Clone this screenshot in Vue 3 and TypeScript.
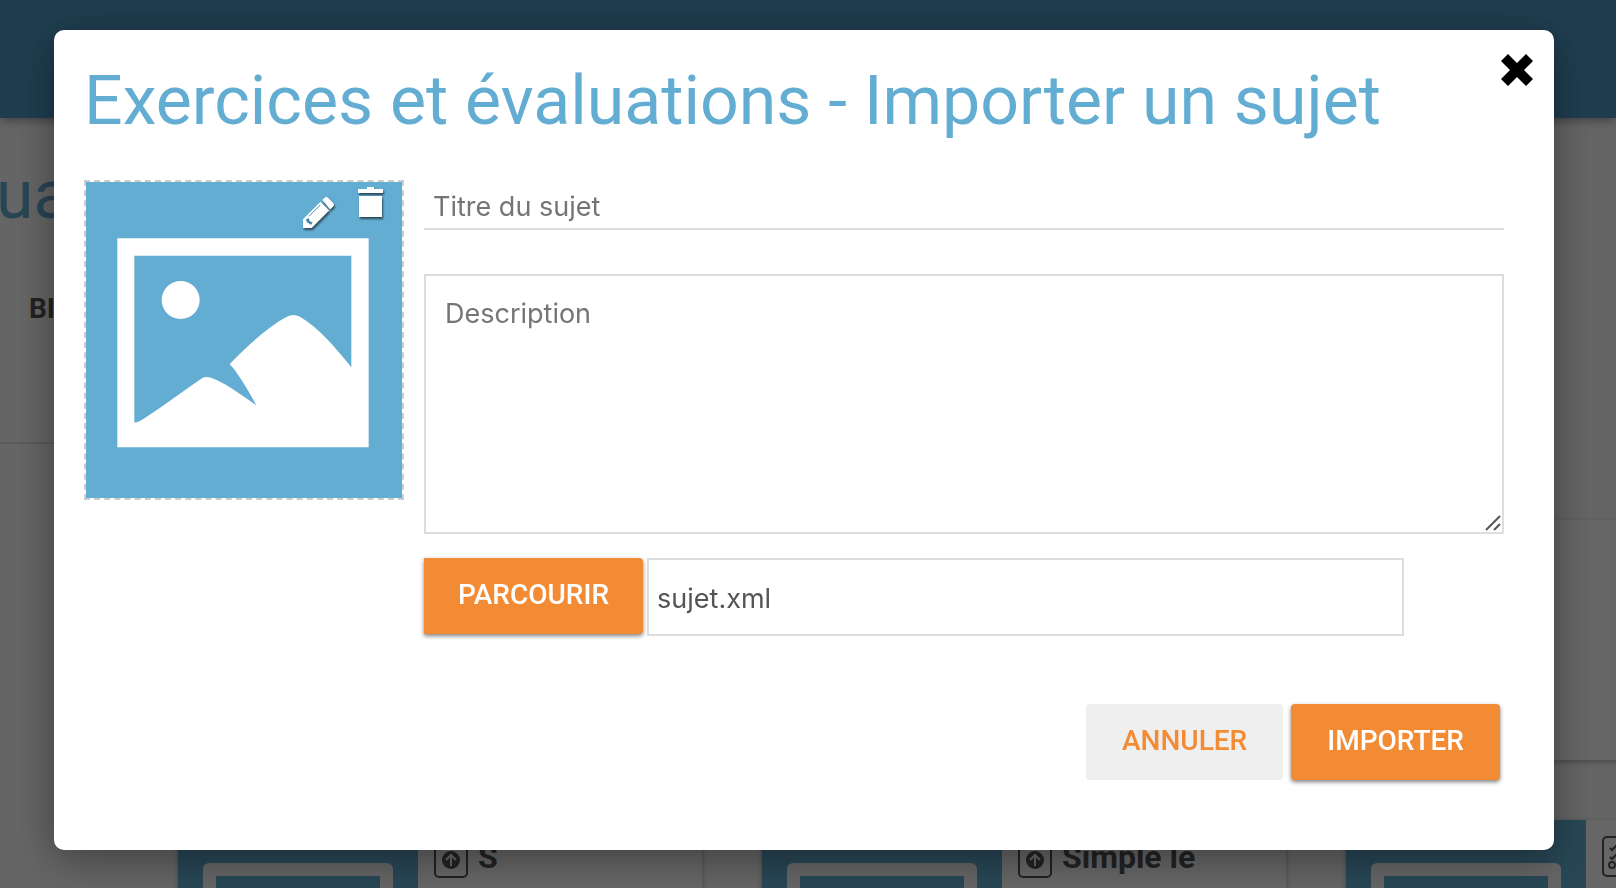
<script setup lang="ts">
import { ref } from 'vue'

interface Subject {
  id: number
  title: string
  icon: 'upload' | 'list'
}

const subjects: Subject[] = [
  { id: 1, title: 'S', icon: 'upload' },
  { id: 2, title: 'Simple le', icon: 'upload' },
  { id: 3, title: '', icon: 'list' },
]

const open = ref(true)
const title = ref('')
const description = ref('')
const fileName = ref('sujet.xml')
</script>

<template>
  <div class="app">
    <header class="topbar"></header>
    <div class="page">
      <h2 class="page-title">ua</h2>
      <div class="tabs">BI</div>
      <div class="upper">
        <div class="band"></div>
        <article class="card featured">
          <svg class="kind" viewBox="0 0 34 42">
            <rect x="1.5" y="1.5" width="31" height="39" rx="4" fill="none" stroke="#555" stroke-width="3" />
            <circle cx="17" cy="24" r="9" fill="#555" />
            <path d="M17 30V19M12 24l5-5 5 5" fill="none" stroke="#fff" stroke-width="2" />
          </svg>
          <p class="featured-text">M<br />2</p>
        </article>
      </div>
      <div class="cards">
        <article v-for="subject in subjects" :key="subject.id" class="card">
          <div class="card-thumb">
            <div class="card-frame"></div>
          </div>
          <div class="card-head">
            <svg v-if="subject.icon === 'upload'" class="kind" viewBox="0 0 34 42">
              <rect x="1" y="1" width="32" height="40" rx="4" fill="none" stroke="#555" stroke-width="2" />
              <circle cx="17" cy="24" r="9" fill="#555" />
              <path d="M17 30V19M12 24l5-5 5 5" fill="none" stroke="#fff" stroke-width="2" />
            </svg>
            <svg v-else class="kind" viewBox="0 0 34 42">
              <rect x="1" y="1" width="32" height="39" rx="4" fill="none" stroke="#555" stroke-width="2" />
              <path d="M8 12l2 2 5-5M8 21l2 2 5-5M18 12h10M18 21h10M18 29h10" fill="none" stroke="#555" stroke-width="2" />
              <circle cx="10" cy="29" r="3" fill="none" stroke="#555" stroke-width="2" />
            </svg>
            <h3 class="card-title">{{ subject.title }}</h3>
          </div>
        </article>
      </div>
    </div>

    <div v-if="open" class="backdrop">
      <section class="modal" role="dialog" aria-modal="true" aria-labelledby="modal-title">
        <button class="close" type="button" aria-label="Fermer" @click="open = false">
          <svg viewBox="0 0 32 32" width="32" height="32">
            <path d="M7 0 16 9 25 0 32 7 23 16 32 25 25 32 16 23 7 32 0 25 9 16 0 7z" />
          </svg>
        </button>
        <h1 id="modal-title" class="modal-title">Exercices et évaluations - Importer un sujet</h1>
        <form class="form" @submit.prevent>
          <div class="cover">
            <svg class="cover-image" viewBox="48 36 948 948">
              <path
                fill="#fff"
                fill-rule="evenodd"
                d="M142 205H896V832H142zM193 257V757Q201 759 220 747C280 708 340 663 397 624Q408 618 425 624C465 638 515 675 559 706Q530 651 497 604Q490 594 479 583C530 527 600 468 645 443Q668 428 690 440C745 472 800 536 844 592V257z"
              />
              <circle cx="332" cy="390" r="57" fill="#fff" />
            </svg>
            <div class="cover-tools">
              <button class="tool" type="button" aria-label="Modifier l'image">
                <svg viewBox="0 0 32 32" width="31" height="31">
                  <path d="M0 23 18 5l9 9L9 32H0z" fill="#fff" />
                  <path d="M20 3l2-2q2-2 4 0l5 5q2 2 0 4l-3 3z" fill="#fff" />
                  <path d="M6 20 18 8" stroke="#4286a6" stroke-width="1" />
                  <path d="M3 23l3-1 1 3 3 1-2 3-2-2-2-1z" fill="#4286a6" />
                </svg>
              </button>
              <button class="tool trash" type="button" aria-label="Supprimer l'image">
                <svg viewBox="0 0 26 32" width="26" height="32">
                  <path d="M0 3H9V1H16V3H25V7H0zM1 10H24V31H1z" fill="#fff" />
                </svg>
              </button>
            </div>
          </div>
          <div class="fields">
            <input v-model="title" class="title-input" type="text" placeholder="Titre du sujet" aria-label="Titre du sujet" />
            <div class="description">
              <textarea v-model="description" class="description-input" placeholder="Description" aria-label="Description"></textarea>
              <svg class="grip" viewBox="0 0 16 16" width="16" height="16">
                <path d="M1 15 15 1M9 15l6-6" fill="none" stroke="#555" stroke-width="2" />
              </svg>
            </div>
            <div class="file-row">
              <button class="btn primary browse" type="button">PARCOURIR</button>
              <input v-model="fileName" class="file-input" type="text" aria-label="Fichier" />
            </div>
          </div>
          <div class="actions">
            <button class="btn" type="button" @click="open = false">ANNULER</button>
            <button class="btn primary" type="submit">IMPORTER</button>
          </div>
        </form>
      </section>
    </div>
  </div>
</template>

<style>
body {
  margin: 0;
}
</style>

<style scoped>
* {
  box-sizing: border-box;
}
.app {
  height: 100vh;
  overflow: hidden;
  background: #fdfdfd;
  font-family: Roboto, "Liberation Sans", sans-serif;
  color: #555;
}
.topbar {
  height: 118px;
  background: #4e9ac6;
  box-shadow: 0 2px 10px rgba(0, 0, 0, 0.4);
}
.page-title {
  margin: 36px 0 0 -4px;
  font-size: 68px;
  line-height: 82px;
  font-weight: 400;
  color: #64add2;
}
.tabs {
  width: 600px;
  margin-top: 52px;
  height: 156px;
  padding: 5px 29px;
  border-bottom: 2px solid #e0e0e0;
  font-size: 28px;
  line-height: 32px;
  font-weight: 700;
}
.upper {
  display: flex;
  height: 376px;
  padding-top: 76px;
}
.band {
  width: 120px;
  height: 66px;
  margin-top: 124px;
  background: #f0f0f0;
}
.card {
  flex: none;
  display: flex;
  width: 524px;
  background: #fff;
  box-shadow: 0 2px 6px rgba(0, 0, 0, 0.3);
}
.featured {
  display: block;
  height: 240px;
  margin-left: 1226px;
  padding: 15px 0 0 256px;
}
.featured-text {
  margin: 2px 0 0;
  font-size: 28px;
  line-height: 42px;
  font-weight: 500;
  color: #64add2;
}
.cards {
  display: flex;
  gap: 60px;
  margin-left: 178px;
}
.card-thumb {
  width: 240px;
  height: 240px;
  padding: 43px 25px;
  background: #64b0d4;
}
.card-frame {
  height: 154px;
  border: 13px solid #fdfdfd;
  border-radius: 6px;
}
.card-head {
  display: flex;
  gap: 10px;
  padding: 16px;
}
.kind {
  display: block;
  width: 34px;
  height: 42px;
}
.card-title {
  margin: 2px 0;
  font-size: 32px;
  line-height: 38px;
  font-weight: 700;
}
.backdrop {
  position: fixed;
  inset: 0;
  padding: 30px 62px 38px 54px;
  background: rgba(0, 0, 0, 0.6);
}
.modal {
  position: relative;
  padding: 30px 50px 70px 30px;
  border-radius: 10px;
  background: #fff;
  box-shadow: 0 8px 40px rgba(0, 0, 0, 0.4);
}
.close {
  position: absolute;
  top: 24px;
  right: 21px;
  padding: 0;
  border: 0;
  background: none;
  cursor: pointer;
}
.close svg {
  display: block;
}
.modal-title {
  margin: 0 0 38px;
  font-size: 68px;
  line-height: 82px;
  font-weight: 400;
  color: #64add2;
}
.form {
  display: grid;
  grid-template-columns: 320px 1fr;
  column-gap: 20px;
}
.cover {
  position: relative;
  height: 320px;
  border: 2px dashed #ccc;
  background: #64add2 padding-box;
}
.cover-image {
  display: block;
  width: 100%;
}
.cover-tools {
  position: absolute;
  top: 4px;
  right: 18px;
  display: flex;
  align-items: flex-start;
  gap: 24px;
}
.tool {
  padding: 0;
  border: 0;
  background: none;
  cursor: pointer;
  filter: drop-shadow(1px 2px 1px rgba(0, 0, 0, 0.6));
}
.tool:first-child {
  margin-top: 11px;
}
.tool svg {
  display: block;
}
.fields {
  min-width: 0;
}
.title-input,
.description-input,
.file-input {
  display: block;
  width: 100%;
  border: 2px solid #ddd;
  border-radius: 0;
  background: #fff;
  font-family: Inter, "Liberation Sans", sans-serif;
  font-size: 27px;
  line-height: 36px;
  color: #555;
  outline: none;
}
.title-input::placeholder,
.description-input::placeholder {
  color: #757575;
  opacity: 1;
}
.title-input {
  height: 50px;
  padding: 4px 9px 0;
  border-width: 0 0 2px;
}
.description {
  position: relative;
  margin-top: 44px;
}
.description-input {
  height: 260px;
  padding: 20px 19px;
  resize: none;
}
.grip {
  position: absolute;
  right: 3px;
  bottom: 3px;
}
.file-row {
  display: flex;
  gap: 4px;
  margin: 24px 100px 0 0;
}
.file-input {
  flex: 1;
  min-width: 0;
  height: 78px;
  padding: 2px 8px 0;
}
.btn {
  height: 76px;
  padding: 0 36px 4px;
  border: 0;
  border-radius: 4px;
  background: #efefef;
  font-family: Roboto, "Liberation Sans", sans-serif;
  font-size: 28px;
  font-weight: 500;
  color: #f38b35;
  cursor: pointer;
}
.primary {
  background: #f38b35;
  color: #fff;
  box-shadow: 0 2px 4px rgba(0, 0, 0, 0.5);
}
.browse {
  padding: 0 34px 4px;
  border-radius: 0 4px 4px 0;
}
.actions {
  grid-column: 1 / -1;
  display: flex;
  justify-content: flex-end;
  gap: 8px;
  margin: 68px 4px 0 0;
}
</style>
